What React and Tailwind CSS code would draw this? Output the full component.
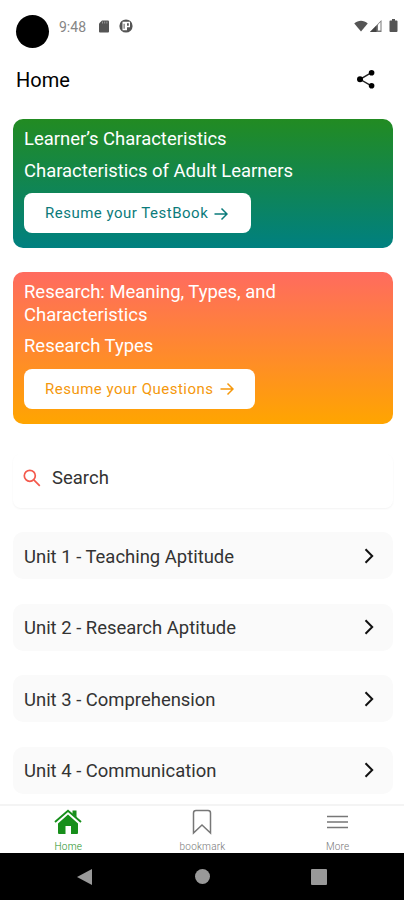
import React from "react";

const RESUME_CARDS = [
  {
    id: "testbook",
    title: "Learner’s Characteristics",
    subtitle: "Characteristics of Adult Learners",
    action: "Resume your TestBook",
    card: "h-[129px] bg-[linear-gradient(to_bottom,#228b22,#008080)]",
    button: "w-[227px] text-[#0b7b7b]",
  },
  {
    id: "questions",
    title: "Research: Meaning, Types, and Characteristics",
    subtitle: "Research Types",
    action: "Resume your Questions",
    card: "h-[152px] bg-[linear-gradient(to_bottom,#ff6b5f,#ffa500)]",
    button: "w-[231px] text-[#f5980c]",
  },
];

const UNITS = [
  "Unit 1 - Teaching Aptitude",
  "Unit 2 - Research Aptitude",
  "Unit 3 - Comprehension",
  "Unit 4 - Communication",
];

function StatusBar() {
  return (
    <div className="flex h-[52px] items-start pl-4 pr-[6px] pt-[15px] text-[#555]">
      <div className="h-[33px] w-[33px] rounded-full bg-black" />
      <span className="ml-[10px] mt-[2px] text-[14px] leading-5 text-[#858585]">9:48</span>
      {/* SD card */}
      <svg className="ml-[12px] mt-[5px]" width="12" height="13" viewBox="0 0 12 13">
        <path d="M4 0.5h6a1 1 0 0 1 1 1v10a1 1 0 0 1-1 1H2a1 1 0 0 1-1-1V3.5z" fill="currentColor" />
        <path d="M4.5 1.5v2M6.7 1.5v2M8.9 1.5v2" stroke="#aaa" strokeWidth="0.8" />
      </svg>
      <svg className="ml-[9px] mt-[4px]" width="14" height="14" viewBox="0 0 14 14">
        <circle cx="7" cy="7" r="6.6" fill="currentColor" />
        <path d="M3.5 2.8H11v5.4H8v3H3.5z" fill="#fff" />
        <path d="M8 4.2h1.8v2.6H8zM4.6 4.8h1v5h-1z" fill="currentColor" />
      </svg>
      <svg className="ml-auto mt-[5px]" width="14" height="12" viewBox="0 0 15 12">
        <path d="M0.3 3.2C4.5-.6 10.5-.6 14.7 3.2L7.5 12z" fill="currentColor" />
      </svg>
      <svg className="ml-[2px] mt-[5px]" width="12" height="12" viewBox="0 0 12 12">
        <path d="M11.5 0v12H0z" fill="#777" />
        <path d="M6.5 5.5V12H0z" fill="#444" />
        <path d="M8 4.5 10.5 2v8.5H8z" fill="#fff" />
      </svg>
      <svg className="ml-[7px] mt-[4px]" width="9" height="13" viewBox="0 0 9 13">
        <path d="M3 0h3v1.4h1.6q.9 0 .9.9v9.8q0 .9-.9.9H1.4q-.9 0-.9-.9V2.3q0-.9.9-.9H3z" fill="currentColor" />
      </svg>
    </div>
  );
}

function Header() {
  return (
    <header className="flex h-[67px] items-start justify-between pl-4 pr-[28px]">
      <h1 className="mt-[14px] text-[20px] leading-7 text-black">Home</h1>
      <svg className="mt-[17px]" width="20" height="20" viewBox="0 0 20 20">
        <path d="M15 3.8 4 10.3l11 6.4" fill="none" stroke="#222" strokeWidth="1.4" />
        <circle cx="4" cy="10.3" r="3" />
        <circle cx="15.6" cy="3.8" r="2.8" />
        <circle cx="15.6" cy="16.8" r="2.8" />
      </svg>
    </header>
  );
}

function ResumeCard({ item }) {
  return (
    <section className={`rounded-[10px] px-[11px] pt-[9px] ${item.card}`}>
      <h2 className="w-[290px] text-[18.45px] leading-[22.5px] text-white">{item.title}</h2>
      <p className="mt-[9px] text-[18.45px] leading-[22.5px] text-white">{item.subtitle}</p>
      <button
        className={`mt-[11px] flex h-10 items-center rounded-lg bg-white pl-[21px] pt-px text-[15px] tracking-[0.5px] ${item.button}`}
      >
        {item.action}
        <svg className="ml-[6px]" width="14" height="14" viewBox="0 0 14 14" fill="none" stroke="currentColor" strokeWidth="1.5">
          <path d="M0.5 7H13M7.5 1.5 13 7l-5.5 5.5" />
        </svg>
      </button>
    </section>
  );
}

function BottomNav() {
  return (
    <nav className="grid h-[49px] shrink-0 grid-cols-3 border-t-2 border-[#f4f4f4] bg-white text-[10px] font-light leading-3 tracking-[0.2px] text-[#777]">
      <div className="flex flex-col items-center pl-[2px] text-[#178f1b]">
        <svg className="mt-[3px]" width="28" height="26" viewBox="0 0 28 26">
          <path d="M4 14.5 14 5.5l10 9V24q0 1-1 1h-6v-8h-5.5v8H5q-1 0-1-1z" fill="currentColor" />
          <path d="M1 13 14 1.7 27 13" fill="none" stroke="currentColor" strokeWidth="1.9" />
          <path d="M18.5 1.5h4v7l-4-3.5z" fill="currentColor" />
        </svg>
        <span className="mt-[6px]">Home</span>
      </div>
      <div className="flex flex-col items-center pl-px">
        <svg className="mt-[3px]" width="20" height="26" viewBox="0 0 20 26" fill="none" stroke="#777" strokeWidth="1.5">
          <path d="M1.5 24V4q0-2.500 2.500-2.500h12q2.500 0 2.500 2.500v20L10 16z" />
        </svg>
        <span className="mt-[6px]">bookmark</span>
      </div>
      <div className="flex flex-col items-center pl-[2px]">
        <svg className="mt-[9px]" width="21" height="14" viewBox="0 0 21 14" stroke="#777" strokeWidth="1.5">
          <path d="M0 1.5h21M0 7h21M0 12.5h21" />
        </svg>
        <span className="mt-[12px]">More</span>
      </div>
    </nav>
  );
}

function SystemBar() {
  return (
    <div className="flex h-[47px] shrink-0 items-center bg-black pl-[77px] text-[#999]">
      <svg width="15" height="16" viewBox="0 0 15 16" fill="currentColor">
        <path d="M15 0v16L0 8z" />
      </svg>
      <div className="ml-[103px] h-[15px] w-[15px] rounded-full bg-[#999]" />
      <div className="ml-[101px] h-4 w-4 rounded-[1px] bg-[#999]" />
    </div>
  );
}

export default function App() {
  return (
    <div className="flex h-[900px] w-[404px] flex-col overflow-hidden bg-white font-['Roboto',sans-serif]">
      <StatusBar />
      <Header />
      <main className="flex min-h-0 flex-1 flex-col pl-[13px] pr-[11px]">
        <div className="flex flex-col gap-6">
          {RESUME_CARDS.map((item) => (
            <ResumeCard key={item.id} item={item} />
          ))}
        </div>

        <div className="mt-[30px] flex h-[54px] shrink-0 items-center rounded-lg pb-[6px] pl-[10px] shadow-[0_1px_2px_rgba(0,0,0,0.05)]">
          <svg width="18" height="18" viewBox="0 0 18 18" fill="none" stroke="#f4594c" strokeWidth="1.7">
            <circle cx="6.8" cy="6.8" r="5.5" />
            <path d="m10.8 10.8 6 6" />
          </svg>
          <span className="ml-[11px] text-[18.5px] leading-6 text-[#333]">Search</span>
        </div>

        <ul className="mt-6 flex flex-col gap-[24.6px]">
          {UNITS.map((unit) => (
            <li key={unit} className="flex h-[47px] shrink-0 items-center justify-between rounded-[10px] bg-[#fafafa] pl-[11px] pr-[19px]">
              <span className="pt-[2px] text-[18.45px] leading-6 text-[#333]">{unit}</span>
              <svg width="10" height="16" viewBox="0 0 10 16" fill="none" stroke="#111" strokeWidth="2">
                <path d="M1.5 1.3 8.2 8l-6.7 6.7" />
              </svg>
            </li>
          ))}
        </ul>
      </main>
      <BottomNav />
      <SystemBar />
    </div>
  );
}
